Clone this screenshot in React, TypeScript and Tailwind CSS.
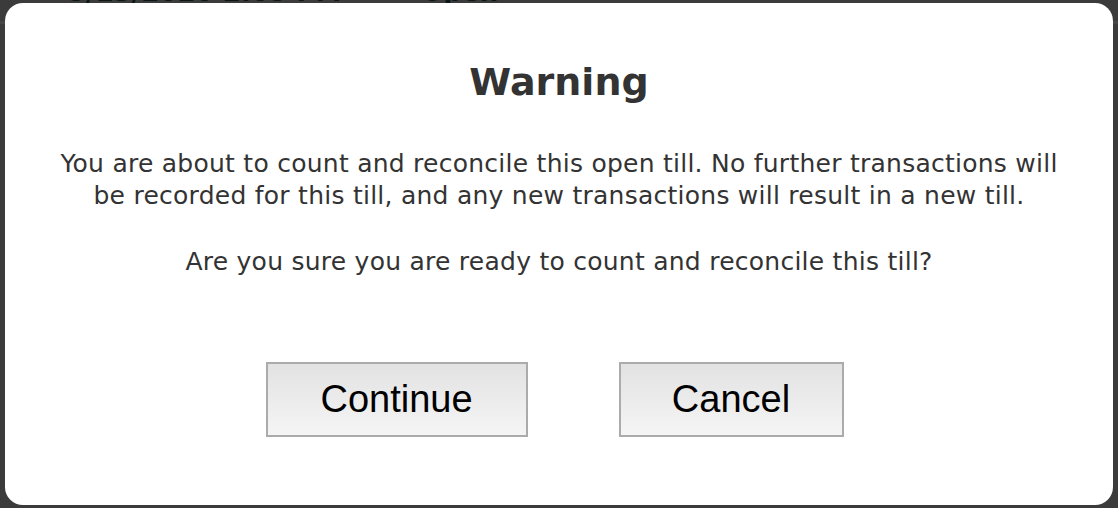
export default function App() {
  return (
    <div className="relative w-[1118px] h-[508px] overflow-hidden bg-[#3b3b3b]">
      {/* list behind the overlay, mostly hidden */}
      <div className="absolute left-0 right-0 top-[-22px] h-[46px] border-b-[3px] border-[#464646] px-[68px] flex items-end gap-[80px] pb-[16px] text-[26px] leading-[26px] font-bold text-[#0b1616] font-['DejaVu_Sans',sans-serif]">
        <span>5/13/2020 2:05 PM</span>
        <span>Open</span>
      </div>
      <div className="relative pt-[3px] px-[5px]">
        <div className="h-[502px] rounded-[18px] bg-white flex flex-col items-center font-['DejaVu_Sans',sans-serif] text-[#333333]">
          <h1 className="mt-[55px] text-[38px] leading-[48px] font-bold">Warning</h1>
          <p className="mt-[42px] text-[25px] leading-[32px] tracking-[0.25px] text-center">
            You are about to count and reconcile this open till. No further transactions will
            <br />
            be recorded for this till, and any new transactions will result in a new till.
          </p>
          <p className="mt-[34px] text-[25px] leading-[32px] tracking-[0.25px] text-center">
            Are you sure you are ready to count and reconcile this till?
          </p>
          <div className="mt-[84px] mr-[9px] flex gap-[91px] font-['Liberation_Sans',Arial,sans-serif] text-black">
            <button className="w-[262px] h-[75px] border-2 border-[#ababab] bg-gradient-to-b from-[#e2e2e2] to-[#f5f5f5] text-[38px]">
              Continue
            </button>
            <button className="w-[225px] h-[75px] border-2 border-[#ababab] bg-gradient-to-b from-[#e2e2e2] to-[#f5f5f5] text-[38px]">
              Cancel
            </button>
          </div>
        </div>
      </div>
    </div>
  );
}
